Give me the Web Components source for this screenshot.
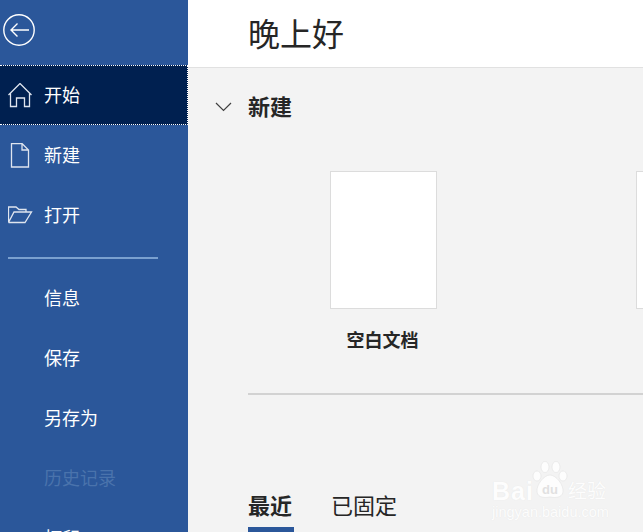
<!DOCTYPE html>
<html lang="zh">
<head>
<meta charset="utf-8">
<title>开始</title>
<style>
  html, body { margin: 0; height: 100%; overflow: hidden; }
  body { display: flex; width: 643px; height: 532px; font-family: "Noto Sans CJK SC", "Noto Sans", sans-serif; }
</style>
</head>
<body>
<side-nav>
  <nav-item active label="开始" icon="home"></nav-item>
  <nav-item label="新建" icon="file"></nav-item>
  <nav-item label="打开" icon="folder"></nav-item>
  <nav-rule></nav-rule>
  <nav-item label="信息"></nav-item>
  <nav-item label="保存"></nav-item>
  <nav-item label="另存为"></nav-item>
  <nav-item disabled label="历史记录"></nav-item>
  <nav-item label="打印"></nav-item>
</side-nav>
<home-pane>
  <new-section>
    <doc-card label="空白文档"></doc-card>
    <doc-card></doc-card>
  </new-section>
  <recent-tabs></recent-tabs>
  <jy-watermark></jy-watermark>
</home-pane>

<script>
const ICONS = {
  home: '<path d="M.5 12 L12 .5 L23.5 12 M2.5 10 V23.5 H8.5 V15 H16.5 V23.5 H21.5 V10"/>',
  file: '<path d="M3.5 .5 H14 L20.5 7 V24 H3.5 Z M14 .5 V7 H20.5"/>',
  folder: '<path d="M.5 19.5 V4 H8 L11 6.5 H18 V9 M.5 19.5 H17 L23.5 9 H6 L.5 19.5"/>'
};

class SideNav extends HTMLElement {
  constructor() {
    super();
    this.attachShadow({ mode: 'open' }).innerHTML = `
      <style>
        :host { display: flex; flex-direction: column; flex: none; width: 188px; height: 532px; overflow: hidden; background: #2b579a; }
        .back { flex: none; height: 65px; display: flex; align-items: flex-start; padding: 14px 0 0 3px; box-sizing: border-box; }
        svg { width: 32px; height: 32px; fill: none; stroke: #fff; stroke-width: 1.4; }
      </style>
      <div class="back">
        <svg viewBox="0 0 32 32"><circle cx="16" cy="16" r="15.2"/><path d="M8 16 H26 M14.5 9.5 L8 16 L14.5 22.5"/></svg>
      </div>
      <slot></slot>`;
  }
}

class NavItem extends HTMLElement {
  constructor() {
    super();
    const icon = ICONS[this.getAttribute('icon')];
    this.attachShadow({ mode: 'open' }).innerHTML = `
      <style>
        :host { display: flex; flex: none; align-items: center; height: 60px; box-sizing: border-box; color: #fff; font-size: 18px; }
        :host([active]) { background: #002050; border-top: 1px dotted #fff; border-bottom: 1px dotted #fff; border-right: 1px dotted #fff; }
        :host([disabled]) { color: #4a73ac; }
        .icon { flex: none; width: 44px; padding-left: 8px; box-sizing: border-box; display: flex; }
        svg { width: 25px; height: 25px; fill: none; stroke: #dfe5ef; stroke-width: 1.3; }
        span { line-height: 24px; position: relative; top: -1px; }
      </style>
      <div class="icon">${icon ? `<svg viewBox="0 0 25 25">${icon}</svg>` : ''}</div>
      <span>${this.getAttribute('label')}</span>`;
  }
}

class NavRule extends HTMLElement {
  constructor() {
    super();
    this.attachShadow({ mode: 'open' }).innerHTML = `
      <style>
        :host { display: block; flex: none; height: 2px; width: 150px; margin: 12px 0 9px 8px; background: #7aa0cf; }
      </style>`;
  }
}

class HomePane extends HTMLElement {
  constructor() {
    super();
    this.attachShadow({ mode: 'open' }).innerHTML = `
      <style>
        :host { display: flex; flex-direction: column; flex: 1; min-width: 0; position: relative; overflow: hidden; background: #f3f3f3; color: #262626; }
        header { flex: none; height: 68px; box-sizing: border-box; background: #fff; border-bottom: 1px solid #e1e1e1; padding-left: 60px; font-size: 32px; line-height: 64px; }
      </style>
      <header>晚上好</header>
      <slot></slot>`;
  }
}

class NewSection extends HTMLElement {
  constructor() {
    super();
    this.attachShadow({ mode: 'open' }).innerHTML = `
      <style>
        :host { display: block; flex: none; padding-left: 60px; }
        .head { height: 78px; position: relative; font-size: 22px; font-weight: 700; line-height: 75px; }
        .head svg { position: absolute; left: -33px; top: 34px; width: 17px; height: 10px; fill: none; stroke: #404040; stroke-width: 1.2; }
        .cards { display: flex; gap: 199px; padding: 25px 0 0 82px; height: 247px; box-sizing: border-box; }
        .rule { height: 2px; background: #d2d2d2; }
      </style>
      <div class="head"><svg viewBox="0 0 17 10"><path d="M1 1 L8.5 8.5 L16 1"/></svg>新建</div>
      <div class="cards"><slot></slot></div>
      <div class="rule"></div>`;
  }
}

class DocCard extends HTMLElement {
  constructor() {
    super();
    const label = this.getAttribute('label') || '';
    this.attachShadow({ mode: 'open' }).innerHTML = `
      <style>
        :host { display: block; flex: none; width: 107px; }
        .page { height: 138px; box-sizing: border-box; background: #fff; border: 1px solid #dcdcdc; }
        .name { margin-top: 17px; text-align: center; white-space: nowrap; font-size: 18px; font-weight: 700; line-height: 26px; color: #262626; position: relative; left: -1px; }
      </style>
      <div class="page"></div>
      <div class="name">${label}</div>`;
  }
}

class RecentTabs extends HTMLElement {
  constructor() {
    super();
    this.attachShadow({ mode: 'open' }).innerHTML = `
      <style>
        :host { display: flex; flex: none; gap: 37px; padding: 94px 0 0 60px; font-size: 22px; line-height: 30px; }
        .on { font-weight: 700; width: 46px; height: 30px; padding-bottom: 8px; border-bottom: 5px solid #2b579a; }
      </style>
      <div class="on">最近</div>
      <div>已固定</div>`;
  }
}

class JyWatermark extends HTMLElement {
  constructor() {
    super();
    this.attachShadow({ mode: 'open' }).innerHTML = `
      <style>
        :host { display: block; position: absolute; left: 304px; top: 462px; width: 120px; height: 58px; color: #fff; font-family: "Liberation Sans", sans-serif; text-shadow: 0 0 1px #e2e2e2; opacity: .85; }
        .bai { position: absolute; left: 0; top: 15px; font-size: 25px; font-weight: 700; line-height: 28px; letter-spacing: 1px; }
        .cn { position: absolute; left: 76px; top: 15px; font-family: "Noto Sans CJK SC", sans-serif; font-size: 19px; line-height: 26px; white-space: nowrap; }
        .url { position: absolute; left: 0; top: 42px; font-size: 14.5px; line-height: 16px; white-space: nowrap; }
        svg { position: absolute; left: 40px; top: -1px; width: 36px; height: 40px; fill: #fff; stroke: #e4e4e4; stroke-width: .7; }
        .du { position: absolute; left: 50px; top: 21px; font-size: 13px; font-weight: 700; line-height: 14px; color: #dedede; text-shadow: none; }
      </style>
      <svg viewBox="0 0 36 40">
        <ellipse cx="5" cy="15" rx="4" ry="5"/>
        <ellipse cx="13" cy="6" rx="4" ry="5.5"/>
        <ellipse cx="24" cy="6" rx="4" ry="5.5"/>
        <ellipse cx="31" cy="15" rx="4" ry="5"/>
        <path d="M18 14 C24 14 32 24 31 31 C30 37 23 37 18 36 C13 37 6 37 5 31 C4 24 12 14 18 14 Z"/>
      </svg>
      <div class="bai">Bai</div>
      <div class="du">du</div>
      <div class="cn">经验</div>
      <div class="url">jingyan.baidu.com</div>`;
  }
}

customElements.define('side-nav', SideNav);
customElements.define('nav-item', NavItem);
customElements.define('nav-rule', NavRule);
customElements.define('home-pane', HomePane);
customElements.define('new-section', NewSection);
customElements.define('doc-card', DocCard);
customElements.define('recent-tabs', RecentTabs);
customElements.define('jy-watermark', JyWatermark);
</script>
</body>
</html>
